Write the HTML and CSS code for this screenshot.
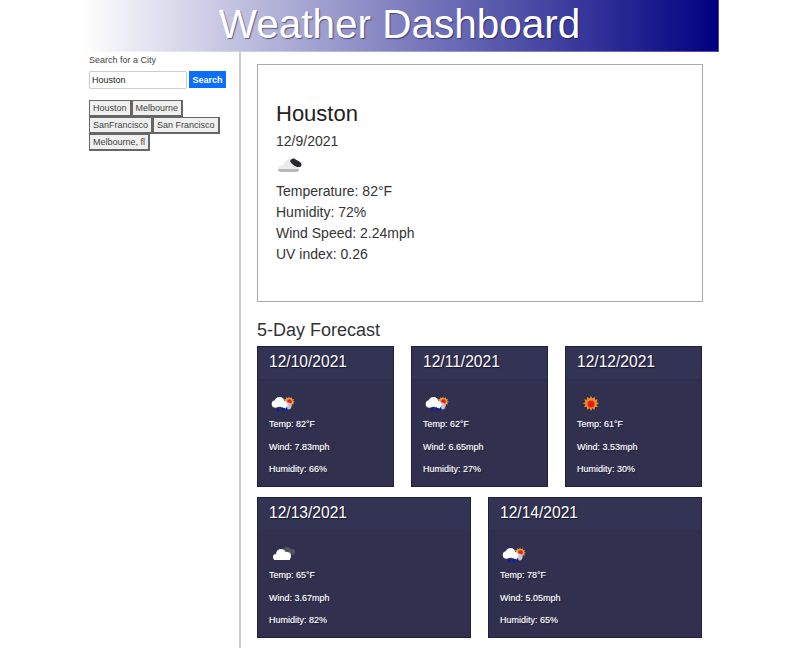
FILE: index.html
```html
<!DOCTYPE html>
<html lang="en">
<head>
    <meta charset="UTF-8">
    <title>Weather Dashboard</title>
    <link rel="stylesheet" href="styles.css">
</head>
<body>
    <div class="page">
        <header class="banner">
            <h1>Weather Dashboard</h1>
        </header>
        <div class="layout">
            <aside class="sidebar">
                <label class="search-label" for="city">Search for a City</label>
                <div class="search-row">
                    <input class="search-input" id="city" type="text" value="Houston">
                    <button class="search-btn">Search</button>
                </div>
                <div class="history">
                    <button class="history-btn">Houston</button>
                    <button class="history-btn">Melbourne</button>
                    <button class="history-btn">SanFrancisco</button>
                    <button class="history-btn">San Francisco</button>
                    <button class="history-btn">Melbourne, fl</button>
                </div>
            </aside>
            <main class="content">
                <section class="current">
                    <h2>Houston</h2>
                    <p>12/9/2021</p>
                    <svg class="icon-large" width="30" height="28" viewBox="0 0 30 28">
                        <path d="M2 17c0-2 2-4 5-4 1-3 4-6 7-6 3 0 5 2 6 5 2 0 3 2 3 5z" fill="#ececec"/>
                        <path d="M2 17h21c0 2-1 3-3 3H5c-2 0-3-1-3-3z" fill="#b8b8b8"/>
                        <path d="M14 9c1-2 3-3 5-2l5 3c2 1 2 4 0 5-2 0-4 0-5-1-2-1-4-3-5-5z" fill="#2a2a2e"/>
                    </svg>
                    <p>Temperature: 82°F</p>
                    <p>Humidity: 72%</p>
                    <p>Wind Speed: 2.24mph</p>
                    <p>UV index: 0.26</p>
                </section>
                <h3 class="forecast-title">5-Day Forecast</h3>
                <section class="forecast">
                    <article class="card">
                        <div class="card-date">12/10/2021</div>
                        <div class="card-body">
                            <svg class="icon" width="30" height="24" viewBox="0 0 30 24">
                                <use href="#rain-sun"/>
                            </svg>
                            <p>Temp: 82°F</p>
                            <p>Wind: 7.83mph</p>
                            <p>Humidity: 66%</p>
                        </div>
                    </article>
                    <article class="card">
                        <div class="card-date">12/11/2021</div>
                        <div class="card-body">
                            <svg class="icon" width="30" height="24" viewBox="0 0 30 24">
                                <use href="#rain-sun"/>
                            </svg>
                            <p>Temp: 62°F</p>
                            <p>Wind: 6.65mph</p>
                            <p>Humidity: 27%</p>
                        </div>
                    </article>
                    <article class="card">
                        <div class="card-date">12/12/2021</div>
                        <div class="card-body">
                            <svg class="icon" width="30" height="24" viewBox="0 0 30 24">
                                <path d="M14 6.500l1.300 2.700 2.500-1.500.2 2.800 2.900-.2-1.500 2.500 2.700 1.300-2.700 1.300 1.500 2.500-2.900-.2-.2 2.800-2.500-1.500-1.300 2.700-1.300-2.700-2.500 1.500-.2-2.800-2.900.2 1.500-2.500-2.700-1.300 2.700-1.300-1.500-2.500 2.900.2.200-2.800 2.500 1.500z" fill="#e8902c" transform="translate(0 -.8)"/>
                                <circle cx="14" cy="14" r="3.500" fill="#f01818"/>
                            </svg>
                            <p>Temp: 61°F</p>
                            <p>Wind: 3.53mph</p>
                            <p>Humidity: 30%</p>
                        </div>
                    </article>
                    <article class="card">
                        <div class="card-date">12/13/2021</div>
                        <div class="card-body">
                            <svg class="icon" width="30" height="24" viewBox="0 0 30 24">
                                <circle cx="18" cy="10" r="4" fill="#55555e"/>
                                <circle cx="23" cy="11" r="3" fill="#55555e"/>
                                <circle cx="7" cy="16" r="3" fill="#fff"/>
                                <circle cx="12" cy="13" r="5" fill="#fff"/>
                                <circle cx="18" cy="15" r="4" fill="#fff"/>
                                <rect x="5" y="15" width="16" height="4" fill="#fff"/>
                            </svg>
                            <p>Temp: 65°F</p>
                            <p>Wind: 3.67mph</p>
                            <p>Humidity: 82%</p>
                        </div>
                    </article>
                    <article class="card">
                        <div class="card-date">12/14/2021</div>
                        <div class="card-body">
                            <svg class="icon" width="30" height="24" viewBox="0 0 30 24">
                                <use href="#rain-sun"/>
                            </svg>
                            <p>Temp: 78°F</p>
                            <p>Wind: 5.05mph</p>
                            <p>Humidity: 65%</p>
                        </div>
                    </article>
                </section>
            </main>
        </div>
    </div>

    <!-- shared icon -->
    <svg class="sprite" width="0" height="0">
        <defs>
            <g id="rain-sun">
                <path d="M20 6.500l.9 1.700 1.800-.9.200 2 2.100-.2-.9 1.800 1.800.9-1.800.9.900 1.800-2.100-.2-.2 2-1.800-.9-.9 1.700-.9-1.700-1.800.9-.2-2-2.100.2.900-1.800-1.800-.9 1.800-.9-.9-1.800 2.100.2.200-2 1.800.9z" fill="#e8a040"/>
                <circle cx="20.500" cy="11.500" r="2.300" fill="#f01818"/>
                <circle cx="19" cy="16" r="3.500" fill="#c4c4cc"/>
                <circle cx="6.500" cy="14" r="3.800" fill="#fff"/>
                <circle cx="10.500" cy="12" r="5" fill="#fff"/>
                <circle cx="15" cy="14.500" r="3.500" fill="#fff"/>
                <path d="M9 17c1.200 1.500 1.800 3 1.300 4.200-1.100.7-2.500-.2-2.500-1.700zM13.500 17c1.200 1.500 1.800 3 1.300 4.200-1.100.7-2.500-.2-2.500-1.700zM17.500 17c1 1 1.500 2.500 1 3.600-1 .6-2.200-.2-2.200-1.500z" fill="#0a1fa8"/>
            </g>
        </defs>
    </svg>
</body>
</html>
```

FILE: styles.css
```css
* {
    box-sizing: border-box;
    margin: 0;
    padding: 0;
    font-family: "Liberation Sans", Arial, sans-serif;
}

body {
    background-color: #ffffff;
    color: #212529;
}

.page {
    width: 638px;
    margin-left: 81px;
}

/* Header */
.banner {
    height: 52px;
    background: linear-gradient(to right, #ffffff, #000080) border-box;
    border-right: 1px solid rgba(255, 255, 255, 0.3);
    border-bottom: 1px solid rgba(255, 255, 255, 0.3);
    text-align: center;
}

.banner h1 {
    font-size: 40.500px;
    font-weight: 400;
    line-height: 48px;
    color: #ffffff;
    text-shadow: 1px 1px 1px rgba(0, 0, 60, 0.5);
}

.layout {
    display: flex;
    min-height: 596px;
}

/* Sidebar */
.sidebar {
    width: 160px;
    flex-shrink: 0;
    border-right: 2px solid #cccccc;
    padding: 3px 8px 0;
}

.search-label {
    display: block;
    font-size: 9px;
    line-height: 11px;
    color: #444444;
}

.search-row {
    display: flex;
    gap: 2px;
    margin-top: 5px;
}

.search-input {
    width: 98px;
    height: 18px;
    padding: 0 2px;
    font-size: 9px;
    color: #222222;
    border: 1px solid #cccccc;
    border-radius: 2px;
}

.search-btn {
    width: 37px;
    height: 17px;
    font-size: 9px;
    font-weight: 700;
    color: #ffffff;
    background-color: #0d6efd;
    border: 1px solid #0d6efd;
}

.history {
    display: flex;
    flex-wrap: wrap;
    margin-top: 11px;
}

.history-btn {
    height: 17px;
    padding: 0 3px;
    font-size: 9px;
    color: #444444;
    background-color: #efefef;
    border: 1px solid #666666;
    border-right-width: 2px;
    border-bottom-width: 2px;
}

/* Main column */
.content {
    flex: 1;
    padding: 12px 16px 0;
}

.current {
    height: 238px;
    padding: 36px 18px 0;
    border: 1px solid #aaaaaa;
}

.current h2 {
    font-size: 22px;
    font-weight: 400;
    line-height: 26px;
    color: #222222;
    margin-bottom: 4px;
}

.current p {
    font-size: 14px;
    line-height: 21px;
    color: #333333;
}

.icon-large {
    display: block;
    margin-bottom: 1px;
}

.forecast-title {
    font-size: 18px;
    font-weight: 400;
    line-height: 22px;
    margin-top: 17px;
    margin-bottom: 5px;
    color: #333333;
}

/* Forecast cards */
.forecast {
    display: flex;
    flex-wrap: wrap;
    column-gap: 17px;
    row-gap: 10px;
    margin-right: 1px;
}

.card {
    flex: 1 1 137px;
    height: 141px;
    background-color: #31314f;
    border: 1px solid #1f1f44;
    color: #ffffff;
}

.card-date {
    height: 33px;
    padding: 5px 11px 0;
    font-size: 15.600px;
    line-height: 19px;
    background-color: #333354;
    border-bottom: 1px solid #2e2e4c;
    text-shadow: 1px 1px 1px #14142e;
}

.card-body {
    padding: 10px 11px 0;
}

.card-body p {
    font-size: 9px;
    line-height: 11px;
    margin-bottom: 11.500px;
    text-shadow: 0 0 1px rgba(255, 255, 255, 0.5), 1px 1px 1px #14142e;
}

.icon {
    display: block;
    margin-bottom: 5px;
}

.sprite {
    position: absolute;
}
```
